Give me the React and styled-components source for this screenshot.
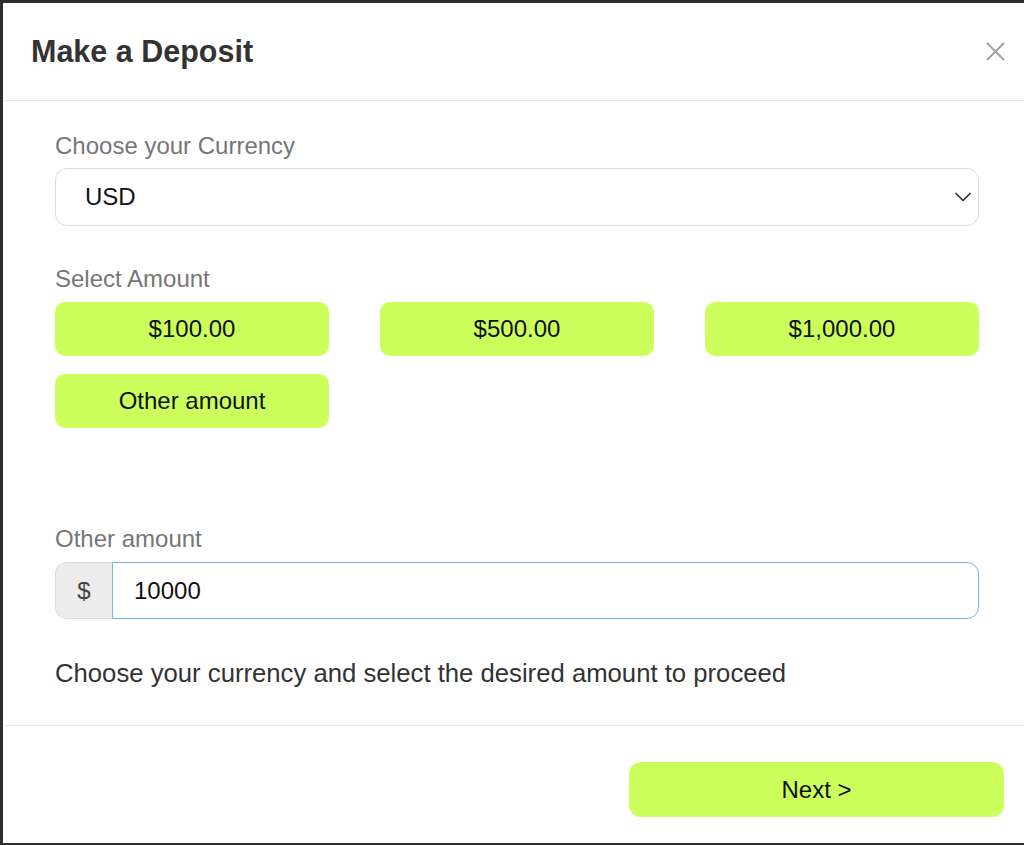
import React from "react";
import styled, { createGlobalStyle } from "styled-components";

const GlobalStyle = createGlobalStyle`
  html, body {
    margin: 0;
    height: 100%;
    overflow: hidden;
    background: #2e2f2d;
    font-family: "Liberation Sans", Arial, Helvetica, sans-serif;
  }
`;

const AMOUNTS = ["$100.00", "$500.00", "$1,000.00", "Other amount"];

export default function App() {
  return (
    <>
      <GlobalStyle />
      <Frame>
        <Modal>
          <Header>
            <Title>Make a Deposit</Title>
            <Close aria-label="Close">
              <svg width="19" height="19" viewBox="0 0 19 19">
                <path
                  d="M1.5 1.5 L17.5 17.5 M17.5 1.5 L1.5 17.5"
                  stroke="#a3a3a3"
                  strokeWidth="2"
                  strokeLinecap="round"
                />
              </svg>
            </Close>
          </Header>

          <Body>
            <Label>Choose your Currency</Label>
            <SelectBox>
              <span>USD</span>
              <svg width="16" height="10" viewBox="0 0 16 10">
                <path
                  d="M1 1.5 L8 8.5 L15 1.5"
                  fill="none"
                  stroke="#333"
                  strokeWidth="1.7"
                  strokeLinecap="round"
                  strokeLinejoin="round"
                />
              </svg>
            </SelectBox>

            <Label $gap={35}>Select Amount</Label>
            <AmountGrid>
              {AMOUNTS.map((a) => (
                <AmountButton key={a}>{a}</AmountButton>
              ))}
            </AmountGrid>

            <Label $gap={93}>Other amount</Label>
            <InputGroup>
              <Addon>$</Addon>
              <AmountInput defaultValue="10000" />
            </InputGroup>

            <Help>Choose your currency and select the desired amount to proceed</Help>
          </Body>

          <Footer>
            <NextButton>Next &gt;</NextButton>
          </Footer>
        </Modal>
      </Frame>
    </>
  );
}

const Frame = styled.div`
  padding: 3px 0 0 3px;
  height: 845px;
  box-sizing: border-box;
`;

const Modal = styled.div`
  width: 1028px;
  height: 840px;
  background: #fff;
  display: flex;
  flex-direction: column;
`;

const Header = styled.div`
  height: 97px;
  flex-shrink: 0;
  border-bottom: 1px solid #e7e7e7;
  display: flex;
  align-items: center;
  justify-content: space-between;
  padding: 0 26px 0 28px;
`;

const Title = styled.h5`
  margin: 0;
  font-size: 30.5px;
  font-weight: 700;
  color: #333;
  line-height: 1.2;
`;

const Close = styled.button`
  border: 0;
  background: none;
  padding: 0;
  display: flex;
  cursor: pointer;
`;

const Body = styled.div`
  flex: 1;
  display: flex;
  flex-direction: column;
  padding: 27px 52px 0;
`;

const Label = styled.div`
  font-size: 24px;
  line-height: 36px;
  color: #767676;
  margin-top: ${(p) => p.$gap || 0}px;
  margin-bottom: ${(p) => (p.$gap ? 5 : 4)}px;
`;

const SelectBox = styled.div`
  height: 58px;
  box-sizing: border-box;
  border: 1px solid #dcdcdc;
  border-radius: 12px;
  display: flex;
  align-items: center;
  justify-content: space-between;
  padding: 0 7px 0 29px;
  font-size: 24px;
  color: #111;
`;

const AmountGrid = styled.div`
  display: grid;
  grid-template-columns: repeat(3, 274px);
  column-gap: 51px;
  row-gap: 18px;
`;

const AmountButton = styled.button`
  height: 54px;
  border: 0;
  border-radius: 10px;
  background: #ccff5c;
  font-family: inherit;
  font-size: 24px;
  color: #111;
  cursor: pointer;
`;

const InputGroup = styled.div`
  display: flex;
  height: 57px;
`;

const Addon = styled.div`
  width: 57px;
  box-sizing: border-box;
  background: #ececec;
  border: 1px solid #dcdcdc;
  border-right: 0;
  border-radius: 12px 0 0 12px;
  display: flex;
  align-items: center;
  justify-content: center;
  font-size: 24px;
  color: #444;
`;

const AmountInput = styled.input`
  flex: 1;
  min-width: 0;
  box-sizing: border-box;
  border: 1.5px solid #76b4ee;
  border-radius: 0 12px 12px 0;
  padding: 0 0 0 21px;
  font-family: inherit;
  font-size: 24px;
  color: #111;
  outline: none;
`;

const Help = styled.p`
  margin: 36px 0 0;
  font-size: 25.7px;
  line-height: 36px;
  color: #333;
`;

const Footer = styled.div`
  height: 118px;
  flex-shrink: 0;
  box-sizing: border-box;
  border-top: 1px solid #e7e7e7;
  display: flex;
  justify-content: flex-end;
  align-items: flex-start;
  padding: 36px 27px 0 0;
`;

const NextButton = styled.button`
  width: 375px;
  height: 55px;
  border: 0;
  border-radius: 12px;
  background: #ccff5c;
  font-family: inherit;
  font-size: 24px;
  color: #111;
  cursor: pointer;
`;
